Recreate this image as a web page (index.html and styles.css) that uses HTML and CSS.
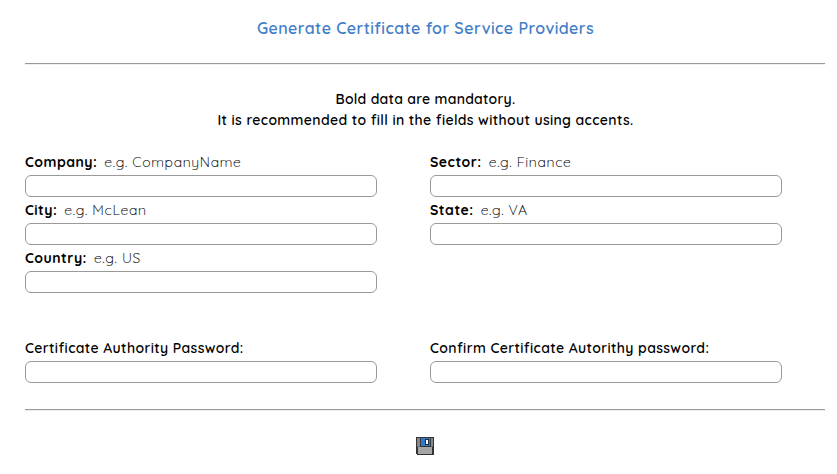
FILE: index.html
```html
<!DOCTYPE html>
<html lang="en">
<head>
<meta charset="utf-8">
<title>Generate Certificate</title>
<link rel="stylesheet" href="styles.css">
</head>
<body>
<main class="page">
  <h1 class="title">Generate Certificate for Service Providers</h1>
  <hr class="rule">
  <div class="notice">
    <p class="notice-short">Bold data are mandatory.</p>
    <p class="notice-long">It is recommended to fill in the fields without using accents.</p>
  </div>
  <form class="form">
    <div class="grid">
      <div class="field"><label for="company"><b>Company:</b><span class="hint">e.g. CompanyName</span></label><input id="company" type="text"></div>
      <div class="field"><label for="sector"><b>Sector:</b><span class="hint">e.g. Finance</span></label><input id="sector" type="text"></div>
      <div class="field"><label for="city"><b>City:</b><span class="hint">e.g. McLean</span></label><input id="city" type="text"></div>
      <div class="field"><label for="state"><b>State:</b><span class="hint">e.g. VA</span></label><input id="state" type="text"></div>
      <div class="field"><label for="country"><b>Country:</b><span class="hint">e.g. US</span></label><input id="country" type="text"></div>
    </div>
    <div class="grid passwords">
      <div class="field"><label for="pass"><b>Certificate Authority Password:</b></label><input id="pass" type="password"></div>
      <div class="field"><label for="confirm"><b>Confirm Certificate Autorithy password:</b></label><input id="confirm" type="password"></div>
    </div>
    <hr class="rule">
    <button class="save" type="button" aria-label="Save">
      <svg width="18" height="18" viewBox="0 0 18 18" shape-rendering="crispEdges">
        <path d="M0 0h18v18H1v-1H0z" fill="#333"/>
        <path d="M1 1h3v9H1zM15 1h2v9h-2z" fill="#85878a"/>
        <path d="M5 1h9v8H5z" fill="#2f79c8"/>
        <path d="M4 0h1v9H4zM14 0h1v9h-1z" fill="#353c44"/>
        <path d="M9 2h4v6H9z" fill="#202b38"/>
        <path d="M10 3h2v4h-2z" fill="#fff"/>
        <path d="M1 9h2v1H1zM15 9h2v1h-2z" fill="#6b6e71"/>
        <path d="M2 10h14v7H2z" fill="#a5a5a5"/>
      </svg>
    </button>
  </form>
</main>
</body>
</html>
```
FILE: styles.css
```css
* { box-sizing: border-box; }
body { margin: 0; background: #fff; color: #000; font-family: Quicksand, Lato, sans-serif; font-size: 14px; line-height: 21px; font-variant-ligatures: none; }
.page { width: 801px; margin-left: 25px; padding-top: 18px; }
.title { margin: 0 0 24px; font-size: 16px; line-height: 21px; font-weight: 600; letter-spacing: 0.42px; text-align: center; color: #427ec8; }
.rule { width: 800px; height: 2px; margin: 0; border: 0; border-top: 1px solid #999; border-bottom: 1px solid #eee; }
.notice { margin: 24px 0 21px; text-align: center; font-weight: 600; letter-spacing: 0.35px; }
.notice p { margin: 0; white-space: nowrap; }
.notice .notice-short { letter-spacing: 0.25px; }
.grid { display: grid; grid-template-columns: 352px 352px; column-gap: 53px; }
.field { height: 48px; }
label { display: block; height: 23px; line-height: 21px; white-space: nowrap; letter-spacing: 0.5px; }
b { font-weight: 700; }
.hint { margin-left: 7px; font-weight: 300; letter-spacing: 0.66px; -webkit-text-stroke: 0.1px #000; }
input { display: block; width: 352px; height: 22px; margin: 0; padding: 0 6px; border: 1px solid #999; border-radius: 6px; background: #fff; }
.passwords { margin-top: 42px; margin-bottom: 23px; }
.passwords label { letter-spacing: 0.38px; }
.passwords b { font-weight: 600; }
.save { display: block; width: 18px; height: 18px; margin: 26px 0 0 391px; padding: 0; border: 0; background: none; }
.save svg { display: block; }
```
